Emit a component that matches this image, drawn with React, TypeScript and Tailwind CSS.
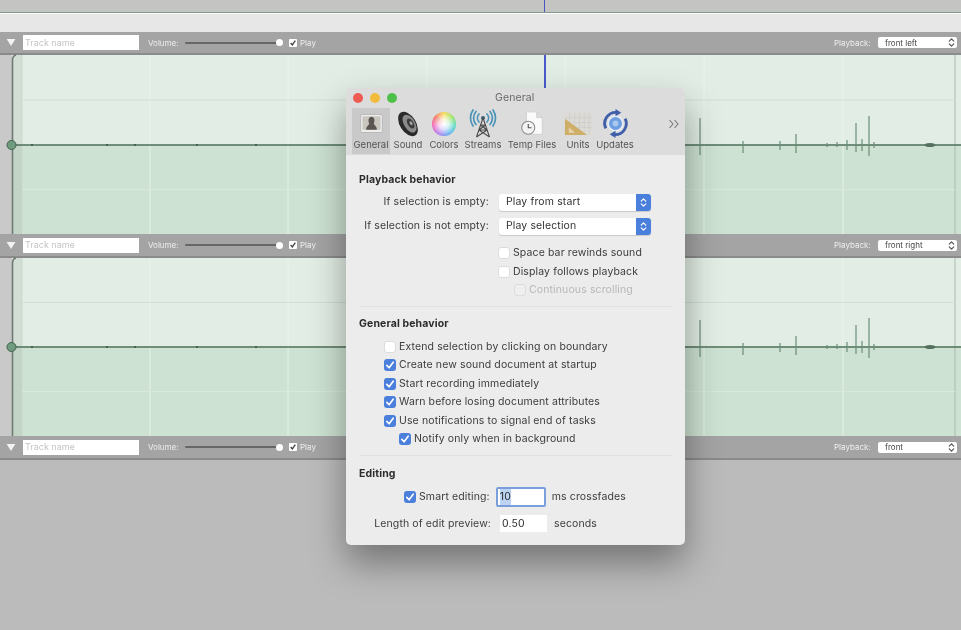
import React from "react";

const FONT = "font-['Inter','Liberation_Sans',sans-serif]";

function Tick({ className = "" }: { className?: string }) {
  return (
    <svg viewBox="0 0 12 12" className={className}>
      <path d="M2.8 6.4 L5.1 8.8 L9.2 3.2" fill="none" stroke="#fff" strokeWidth="1.6" strokeLinecap="round" strokeLinejoin="round" />
    </svg>
  );
}

function Updown({ color }: { color: string }) {
  return (
    <svg viewBox="0 0 10 14" className="h-[13px] w-[9px]">
      <path d="M2.5 5.5 L5 3 L7.5 5.5 M2.5 8.5 L5 11 L7.5 8.5" fill="none" stroke={color} strokeWidth="1.3" strokeLinecap="round" strokeLinejoin="round" />
    </svg>
  );
}

function TrackBar({ name, playback, pad }: { name: string; playback: string; pad: string }) {
  return (
    <div className={`flex items-center bg-[#a4a4a4] border-b-2 border-[#8b8b8b] text-[8px] text-[#eeeeee] ${pad}`}>
      <svg viewBox="0 0 10 8" className="ml-[6px] h-[7px] w-[10px]">
        <path d="M0 0 H10 L5 8 Z" fill="#f2f2f2" />
      </svg>
      <div className="ml-[7px] flex h-[15px] w-[116px] items-center bg-white pl-[2px] text-[9px] text-[#c4c4c4]">{name}</div>
      <span className="ml-[9px] w-[37px]">Volume:</span>
      <div className="relative h-[2px] w-[95px] rounded-full bg-[#666666]">
        <div className="absolute right-[-3px] top-[-2.5px] h-[7px] w-[7px] rounded-full bg-white" />
      </div>
      <div className="ml-[9px] flex h-[8px] w-[8px] items-center justify-center rounded-[1px] bg-white">
        <svg viewBox="0 0 12 12" className="h-[8px] w-[8px]">
          <path d="M2.5 6 L5 9 L9.5 2.5" fill="none" stroke="#444" strokeWidth="2" />
        </svg>
      </div>
      <span className="ml-[3px]">Play</span>
      <span className="ml-auto w-[44px]">Playback:</span>
      <div className="mr-[4px] flex h-[11px] w-[79px] items-center justify-between rounded-[2px] bg-white pl-[7px] pr-[1px] text-[#444444]">
        <span>{playback}</span>
        <Updown color="#555" />
      </div>
    </div>
  );
}

const spikes: [number, number, number][] = [
  [700, 27, 10], [743, 4, 8], [766, 1, 1], [780, 4, 5], [796, 11, 8], [814, 1, 1], [827, 2, 2],
  [837, 3, 2], [847, 5, 5], [856, 22, 7], [862, 6, 6], [869, 29, 11], [874, 3, 3],
];

function Track({ h, center }: { h: number; center: number }) {
  const verticals = [22, 150, 288, 427, 565, 704, 843];
  return (
    <div className="flex">
      <div className="w-[12px] bg-[#c9c9c9]" style={{ height: h }} />
      <div className="relative flex-1 bg-[#c9c9c9]">
        <svg viewBox={`12 0 949 ${h}`} className="block w-full overflow-visible" style={{ height: h }}>
          <rect x="12" y="0" width="949" height={center} fill="#e2eee5" />
          <rect x="12" y={center} width="949" height={h - center} fill="#cde2d2" />
          <rect x="13" y="0" width="9" height={h} fill="#9aa39d" fillOpacity="0.22" />
          {verticals.map((x) => (
            <line key={x} x1={x} x2={x} y1="0" y2={h} stroke={x === 22 ? "#c6d6cb" : "#eef5f0"} strokeOpacity="0.7" strokeWidth="1.1" />
          ))}
          <line x1="955" x2="955" y1="0" y2={h} stroke="#a9baae" strokeWidth="1" />
          <line x1="22" x2="955" y1={center / 2} y2={center / 2} stroke="#d0e0d5" strokeWidth="1" />
          <line x1="22" x2="955" y1={center + (h - center) / 2} y2={center + (h - center) / 2} stroke="#d8e8dc" strokeWidth="1" />
          <path d={`M12.5 ${h} V5 Q12.5 1 16 0`} fill="none" stroke="#6f7a73" strokeWidth="1.6" />
          <line x1="12" x2="961" y1={center} y2={center} stroke="#4c6f57" strokeWidth="1.4" />
          {[31, 106, 134, 196, 255].map((x) => (
            <line key={x} x1={x} x2={x + 2} y1={center} y2={center} stroke="#44644f" strokeWidth="1.8" />
          ))}
          {spikes.map(([x, up, down]) => (
            <line key={x} x1={x} x2={x} y1={center - up} y2={center + down} stroke="#6b8d77" strokeWidth="1.2" />
          ))}
          <ellipse cx="930" cy={center} rx="5.5" ry="2" fill="#55725f" />
          <circle cx="11.5" cy={center} r="4.5" fill="#6f9c7e" stroke="#43604d" strokeWidth="1" />
          <line x1="545" x2="545" y1="0" y2={center} stroke="#3a48c8" strokeWidth="1.8" />
        </svg>
      </div>
    </div>
  );
}

function GeneralIcon() {
  return (
    <svg viewBox="0 0 30 30" className="h-[27px] w-[27px]">
      <rect x="3" y="5" width="24" height="20" rx="1.5" fill="#ededed" stroke="#b5b5b5" />
      <rect x="5" y="7" width="20" height="15" fill="#c9c5bf" />
      <path d="M9 22 C9 18 12 17 12.5 15 C11 12 11.5 8 15 7.5 C18.5 8 19 12 17.5 15 C18 17 21 18 21 22 Z" fill="#5a5551" />
    </svg>
  );
}
function SoundIcon() {
  return (
    <svg viewBox="0 0 30 30" className="h-[30px] w-[30px]">
      <g transform="rotate(-32 15 15)">
        <ellipse cx="15" cy="15" rx="8" ry="13.5" fill="#2a2a2a" />
        <ellipse cx="16.5" cy="15.5" rx="5.5" ry="10" fill="#8a8a8a" />
        <ellipse cx="17.5" cy="16" rx="3" ry="5.5" fill="#3c3c3c" />
        <ellipse cx="18" cy="16" rx="1.2" ry="2.2" fill="#a8a8a8" />
      </g>
    </svg>
  );
}
function ColorsIcon() {
  return (
    <div className="h-[24px] w-[24px] rounded-full bg-[radial-gradient(circle,#ffffff_0%,rgba(255,255,255,0.75)_30%,rgba(255,255,255,0)_72%),conic-gradient(#f9d84a,#8fe05c,#4fd8c8,#5aa8f0,#a878ee,#f060c0,#f26a5a,#f9d84a)]" />
  );
}
function StreamsIcon() {
  return (
    <svg viewBox="0 0 30 30" className="h-[30px] w-[30px]">
      <g fill="none" stroke="#4b93b8" strokeWidth="1.7" strokeLinecap="round">
        <path d="M11 5 A6 6 0 0 0 11 13" />
        <path d="M8 2.5 A10 10 0 0 0 8 15.5" />
        <path d="M5 1 A14 14 0 0 0 5 17" />
        <path d="M19 5 A6 6 0 0 1 19 13" />
        <path d="M22 2.5 A10 10 0 0 1 22 15.5" />
        <path d="M25 1 A14 14 0 0 1 25 17" />
      </g>
      <circle cx="15" cy="9" r="2" fill="#3f5f74" />
      <path d="M15 9 L8.5 28 M15 9 L21.5 28 M12.5 16 H17.5 M11 21 H19 M12.5 16 L19 21 M17.5 16 L11 21 M11 21 L21.5 28 M19 21 L8.5 28" fill="none" stroke="#4b4b4b" strokeWidth="1.1" />
    </svg>
  );
}
function TempIcon() {
  return (
    <svg viewBox="0 0 30 30" className="h-[28px] w-[28px]">
      <path d="M9 2 H20 L26 8 V26 H9 Z" fill="#fafafa" stroke="#cfcfcf" />
      <path d="M20 2 V8 H26 Z" fill="#dedede" stroke="#cfcfcf" />
      <circle cx="11" cy="19" r="7" fill="#f3f3f3" stroke="#8d8d8d" strokeWidth="1.2" />
      <path d="M11 15 V19 H14.5" fill="none" stroke="#555" strokeWidth="1.2" />
    </svg>
  );
}
function UnitsIcon() {
  return (
    <svg viewBox="0 0 30 30" className="h-[29px] w-[29px]">
      <rect x="1" y="4" width="28" height="23" fill="#dcdbd6" />
      <path d="M6 4 V27 M11 4 V27 M16 4 V27 M21 4 V27 M26 4 V27 M1 9 H29 M1 14 H29 M1 19 H29" stroke="#cbcac5" strokeWidth="0.6" />
      <path d="M1 10 L24 27 H1 Z" fill="#cfae68" />
      <path d="M5 19 L11.5 24.5 H5 Z" fill="#e6d5ab" />
    </svg>
  );
}
function UpdatesIcon() {
  return (
    <svg viewBox="0 0 30 30" className="h-[29px] w-[29px]">
      <circle cx="15" cy="15" r="7.5" fill="#6d9ee0" stroke="#e8eef8" strokeWidth="1.5" />
      <circle cx="15" cy="15" r="3" fill="#a9c8ef" />
      <path d="M5 20 A11.5 11.5 0 0 1 16 3.5" fill="none" stroke="#3f5fa8" strokeWidth="3" />
      <path d="M25 10 A11.5 11.5 0 0 1 14 26.5" fill="none" stroke="#3f5fa8" strokeWidth="3" />
      <path d="M15 0 L21 3.8 L15 7.5 Z M15 22.5 L9 26.2 L15 30 Z" fill="#3f5fa8" />
    </svg>
  );
}

const tools = [
  { label: "General", w: "w-[38px]", icon: <GeneralIcon />, active: true },
  { label: "Sound", w: "w-[36px]", icon: <SoundIcon /> },
  { label: "Colors", w: "w-[36px]", icon: <ColorsIcon /> },
  { label: "Streams", w: "w-[42px]", icon: <StreamsIcon /> },
  { label: "Temp Files", w: "w-[56px]", icon: <TempIcon /> },
  { label: "Units", w: "w-[36px]", icon: <UnitsIcon /> },
  { label: "Updates", w: "w-[38px]", icon: <UpdatesIcon /> },
];

function Box({ on, faded }: { on?: boolean; faded?: boolean }) {
  if (on) {
    return (
      <div className="flex h-[12px] w-[12px] shrink-0 items-center justify-center rounded-[3px] bg-[#4a7fdc]">
        <Tick className="h-[12px] w-[12px]" />
      </div>
    );
  }
  return <div className={`h-[12px] w-[12px] shrink-0 rounded-[3px] border border-[#dcdcdc] ${faded ? "bg-[#efefef]" : "bg-white"}`} />;
}

function Check({ label, on, indent, faded }: { label: string; on?: boolean; indent: string; faded?: boolean }) {
  return (
    <div className={`flex h-[18.5px] items-center gap-[3px] ${indent} ${faded ? "text-[#b8b8b8]" : "text-[#3c3c3c]"}`}>
      <Box on={on} faded={faded} />
      <span>{label}</span>
    </div>
  );
}

function SelectRow({ label, value }: { label: string; value: string }) {
  return (
    <div className="flex h-[24px] items-center">
      <span className="w-[130px] text-right text-[#3c3c3c]">{label}</span>
      <div className="ml-[10px] flex h-[17px] w-[152px] items-center justify-between rounded-[3px] bg-white pl-[7px] text-[#333333] shadow-[0_1px_1px_rgba(0,0,0,0.15)]">
        <span>{value}</span>
        <div className="flex h-[17px] w-[15px] items-center justify-center rounded-r-[3px] bg-[#4a7fdc]">
          <Updown color="#ffffff" />
        </div>
      </div>
    </div>
  );
}

function Dialog() {
  return (
    <div className="absolute left-[346px] top-[88px] h-[457px] w-[339px] overflow-hidden rounded-[5px] bg-[#ececec] text-[10.5px] tracking-[0.12px] shadow-[0_18px_36px_rgba(0,0,0,0.38)]">
      <div className="relative h-[67px] bg-[#dcdcdc]">
        <div className="flex h-[20px] items-center pl-[7px]">
          <div className="flex gap-[7px]">
            <div className="h-[10px] w-[10px] rounded-full bg-[#ee5a52]" />
            <div className="h-[10px] w-[10px] rounded-full bg-[#f3bb3c]" />
            <div className="h-[10px] w-[10px] rounded-full bg-[#4fc04a]" />
          </div>
          <span className="ml-[98px] text-[10.5px] text-[#6a6a6a]">General</span>
        </div>
        <div className="flex h-[46px] pl-[6px]">
          {tools.map((t) => (
            <div key={t.label} className={`flex ${t.w} flex-col items-center ${t.active ? "bg-[#c9c9c9]" : ""}`}>
              <div className="flex h-[31px] items-center justify-center">{t.icon}</div>
              <span className="whitespace-nowrap text-[9.5px] leading-[12px] tracking-normal text-[#555555]">{t.label}</span>
            </div>
          ))}
          <svg viewBox="0 0 12 10" className="ml-[34px] mt-[11px] h-[10px] w-[12px]">
            <path d="M1.5 1 L5 5 L1.5 9 M6.5 1 L10 5 L6.5 9" fill="none" stroke="#777" strokeWidth="1.1" />
          </svg>
        </div>
      </div>

      <div className="flex flex-col px-[13px] pt-[16px]">
        <div className="h-[19px] font-bold leading-[18px] text-[#2c2c2c]">Playback behavior</div>
        <SelectRow label="If selection is empty:" value="Play from start" />
        <SelectRow label="If selection is not empty:" value="Play selection" />
        <div className="mt-[6px]">
          <Check label="Space bar rewinds sound" indent="ml-[139px]" />
          <Check label="Display follows playback" indent="ml-[139px]" />
          <Check label="Continuous scrolling" indent="ml-[155px]" faded />
        </div>
        <div className="mt-[6px] h-px bg-[#e0e0e0]" />
        <div className="mt-[8px] h-[18px] font-bold leading-[18px] text-[#2c2c2c]">General behavior</div>
        <div className="mt-[5px]">
          <Check label="Extend selection by clicking on boundary" indent="ml-[25px]" />
          <Check label="Create new sound document at startup" indent="ml-[25px]" on />
          <Check label="Start recording immediately" indent="ml-[25px]" on />
          <Check label="Warn before losing document attributes" indent="ml-[25px]" on />
          <Check label="Use notifications to signal end of tasks" indent="ml-[25px]" on />
          <Check label="Notify only when in background" indent="ml-[40px]" on />
        </div>
        <div className="mt-[6px] h-px bg-[#e0e0e0]" />
        <div className="mt-[9px] h-[18px] font-bold leading-[18px] text-[#2c2c2c]">Editing</div>
        <div className="mt-[4px] flex h-[21px] items-center text-[#3c3c3c]">
          <div className="ml-[45px] flex items-center gap-[3px]">
            <Box on />
            <span>Smart editing:</span>
          </div>
          <div className="ml-[6px] flex h-[20px] w-[50px] items-center rounded-[2px] border-2 border-[#7b9fdc] bg-white pl-[2px] text-[#2c2c2c]">
            <span className="bg-[#bcd3f2]">10</span>
          </div>
          <span className="ml-[6px]">ms crossfades</span>
        </div>
        <div className="mt-[6px] flex h-[20px] items-center text-[#3c3c3c]">
          <span className="w-[132px] text-right">Length of edit preview:</span>
          <div className="ml-[9px] flex h-[17px] w-[47px] items-center bg-white pl-[2px] text-[#2c2c2c]">0.50</div>
          <span className="ml-[7px]">seconds</span>
        </div>
      </div>
    </div>
  );
}

export default function App() {
  return (
    <div className={`relative flex h-[630px] w-[961px] flex-col overflow-hidden bg-[#bcbcbc] blur-[0.35px] ${FONT}`}>
      <div className="h-[13px] border-b border-[#7f9a88] bg-[#c4c4c2]">
        <div className="ml-[544px] h-full w-px bg-[#4a55c0]" />
      </div>
      <div className="h-[19px] border-t border-white bg-[#e7e7e7]" />
      <TrackBar name="Track name" playback="front left" pad="h-[23px]" />
      <Track h={179} center={90} />
      <TrackBar name="Track name" playback="front right" pad="h-[24px]" />
      <Track h={178} center={89} />
      <TrackBar name="Track name" playback="front" pad="h-[24px]" />
      <div className="flex-1 bg-[#bbbbbb]" />
      <Dialog />
    </div>
  );
}
